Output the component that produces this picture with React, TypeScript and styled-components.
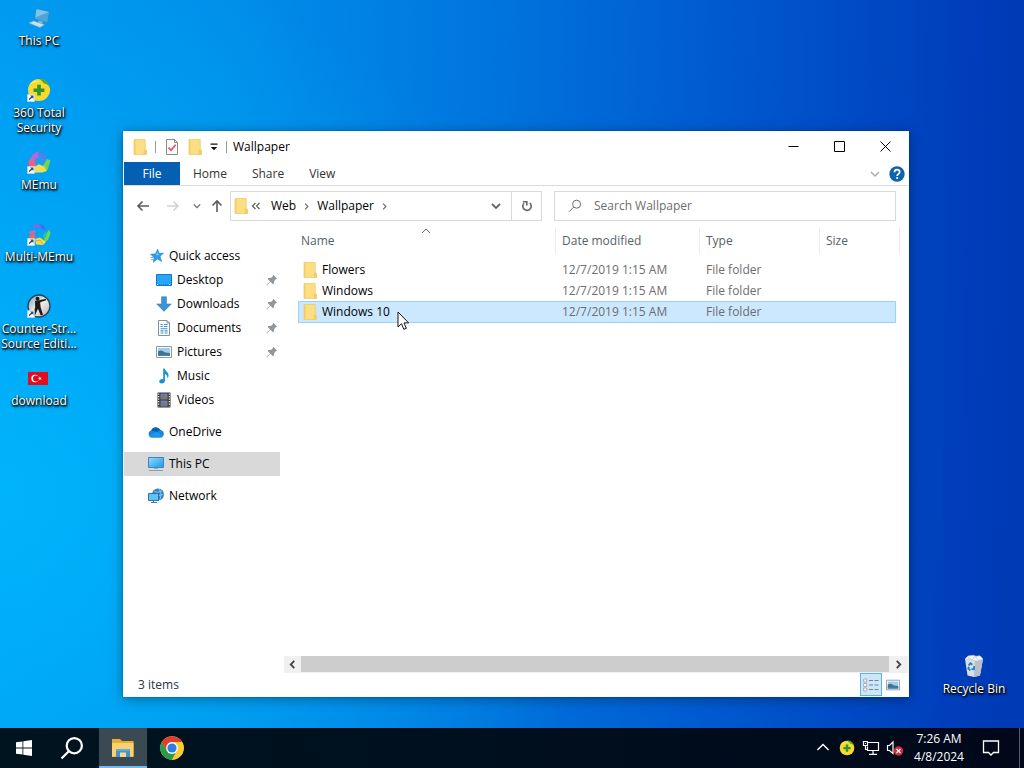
import React from "react";
import styled, { createGlobalStyle, css } from "styled-components";

const GlobalStyle = createGlobalStyle`
  * { box-sizing: border-box; }
  html, body, #root { height: 100%; }
  body {
    margin: 0;
    overflow: hidden;
    font-family: "Open Sans", "Noto Sans", sans-serif;
    font-size: 12px;
    line-height: 16px;
    color: #000;
  }
  button, input {
    margin: 0;
    padding: 0;
    border: 0;
    background: none;
    font: inherit;
    color: inherit;
  }
  svg { display: block; flex: none; }
`;

/* ---------- shell ---------- */

const Screen = styled.div`
  display: flex;
  flex-direction: column;
  height: 100%;
`;

const Desktop = styled.main`
  position: relative;
  flex: 1;
  min-height: 0;
  background:
    radial-gradient(ellipse 60% 75% at 0% 68%, rgba(0, 190, 255, 0.75), rgba(0, 180, 255, 0) 100%),
    linear-gradient(91deg, #0098f0 0%, #008fea 22%, #0074dd 48%, #0052cb 76%, #003dba 94%, #003ab4 100%);
`;

const ShortcutColumn = styled.div`
  display: flex;
  flex-direction: column;
  align-items: flex-end;
  width: 77px;
  padding-top: 6px;
`;

const Shortcut = styled.button<{ $corner?: boolean }>`
  display: flex;
  flex-direction: column;
  align-items: center;
  gap: 3px;
  width: 76px;
  height: 72px;
  color: #fff;
  line-height: 15px;
  text-align: center;
  text-shadow: 1px 1px 2px #000, 0 1px 2px #000, 1px 2px 3px rgba(0, 0, 0, 0.6);
  white-space: pre-line;
  ${(p) =>
    p.$corner &&
    css`
      position: absolute;
      right: 12px;
      bottom: 2px;
    `}
`;

const Pointer = styled.svg`
  position: absolute;
  left: 397px;
  top: 311px;
`;

/* ---------- explorer window ---------- */

const Window = styled.section`
  position: absolute;
  top: 131px;
  right: 115px;
  bottom: 31px;
  left: 123px;
  display: flex;
  flex-direction: column;
  border: 1px solid #f4fbff;
  background: #fff;
  box-shadow: 0 0 1px rgba(0, 40, 90, 0.7), 0 2px 12px rgba(0, 0, 0, 0.35);
`;

const TitleBar = styled.header`
  display: flex;
  align-items: center;
  height: 30px;
  padding-left: 9px;
`;

const QuickTools = styled.div`
  display: flex;
  align-items: center;
  gap: 8px;
`;

const Separator = styled.span`
  width: 1px;
  height: 12px;
  background: #999;
`;

const Title = styled.h1`
  flex: 1;
  margin: 0 0 0 6px;
  font-size: 12px;
  font-weight: 400;
`;

const IconButton = styled.button<{ $w?: number; $h?: number }>`
  display: flex;
  align-items: center;
  justify-content: center;
  width: ${(p) => (p.$w ? p.$w + "px" : "auto")};
  height: ${(p) => (p.$h ? p.$h + "px" : "auto")};
`;

const WindowButton = styled(IconButton)`
  align-self: flex-start;
  width: 46px;
  height: 28px;
`;

const Ribbon = styled.nav`
  display: flex;
  align-items: center;
  gap: 1px;
  height: 24px;
  padding-right: 3px;
  border-bottom: 1px solid #dadbdc;
`;

const Tab = styled.button<{ $file?: boolean }>`
  height: 23px;
  padding: 0 12px;
  color: #333;
  ${(p) =>
    p.$file &&
    css`
      width: 56px;
      background: #0560b3;
      color: #fff;
    `}
`;

const Spacer = styled.span`
  flex: 1;
`;

const Toolbar = styled.div`
  display: grid;
  grid-template-columns: 99px minmax(0, 324fr) minmax(0, 342fr);
  align-items: center;
  height: 40px;
  padding: 0 12px 0 7px;
`;

const History = styled.div`
  display: flex;
  align-items: center;
  gap: 2px;
`;

const AddressBar = styled.div`
  display: flex;
  align-items: center;
  height: 30px;
  margin-right: 12px;
  padding-left: 3px;
  border: 1px solid #d9d9d9;
`;

const Crumb = styled.button`
  padding: 0 7px;
`;

const Refresh = styled(IconButton)`
  width: 30px;
  height: 28px;
  border-left: 1px solid #d9d9d9;
`;

const SearchBox = styled.label`
  display: flex;
  align-items: center;
  gap: 12px;
  height: 30px;
  padding-left: 13px;
  border: 1px solid #d9d9d9;
`;

const SearchInput = styled.input`
  flex: 1;
  min-width: 0;
  outline: none;
  &::placeholder {
    color: #6d6d6d;
    opacity: 1;
  }
`;

const Body = styled.div`
  display: flex;
  flex: 1;
  min-height: 0;
`;

const NavPane = styled.nav`
  width: 156px;
  padding-top: 18px;
`;

const NavItem = styled.a<{ $child?: boolean; $selected?: boolean; $apart?: boolean }>`
  display: flex;
  align-items: center;
  gap: 5px;
  height: 24px;
  margin-top: ${(p) => (p.$apart ? "8px" : "0")};
  padding-left: ${(p) => (p.$child ? "32px" : "24px")};
  padding-right: 2px;
  background: ${(p) => (p.$selected ? "#d9d9d9" : "transparent")};
  color: #000;
  text-decoration: none;
`;

const NavLabel = styled.span`
  flex: 1;
  white-space: nowrap;
`;

const FolderPane = styled.div`
  display: flex;
  flex: 1;
  flex-direction: column;
  min-width: 0;
  margin-left: 4px;
`;

const FileArea = styled.div`
  flex: 1;
  padding: 2px 8px 0 14px;
`;

const FileTable = styled.table`
  width: 100%;
  border-collapse: separate;
  border-spacing: 0;
  table-layout: fixed;
`;

const HeadCell = styled.th<{ $w?: number }>`
  width: ${(p) => (p.$w ? p.$w + "px" : "auto")};
  padding: 0 0 5px;
  font-weight: 400;
`;

const SortButton = styled.button<{ $first?: boolean }>`
  position: relative;
  display: flex;
  align-items: center;
  width: 100%;
  height: 26px;
  padding-left: ${(p) => (p.$first ? "3px" : "6px")};
  border-right: 1px solid #ececec;
  color: #565f6b;
`;

const SortMark = styled.svg`
  position: absolute;
  top: 0;
  left: 48%;
`;

const Row = styled.tr<{ $selected?: boolean }>`
  td {
    height: 21px;
    padding: 0 0 0 6px;
    color: #6d6d6d;
    background-clip: padding-box;
  }
  td:first-child {
    color: #000;
    padding-left: 5px;
  }
  td:last-child {
    border-right: 4px solid transparent;
  }
  ${(p) =>
    p.$selected &&
    css`
      td {
        height: 22px;
        background-color: #cce8ff;
        box-shadow: inset 0 1px #99d1ff, inset 0 -1px #99d1ff;
      }
      td:first-child {
        box-shadow: inset 0 1px #99d1ff, inset 0 -1px #99d1ff, inset 1px 0 #99d1ff;
      }
      td:last-child {
        box-shadow: inset 0 1px #99d1ff, inset 0 -1px #99d1ff, inset -1px 0 #99d1ff;
      }
    `}
`;

const FileName = styled.span`
  display: flex;
  align-items: center;
  gap: 5px;
`;

const ScrollBar = styled.div`
  display: flex;
  height: 17px;
  padding-bottom: 1px;
  background: #f0f0f0;
`;

const ScrollThumb = styled.div`
  flex: 1;
  background: #cdcdcd;
`;

const StatusBar = styled.footer`
  display: flex;
  align-items: center;
  height: 23px;
  padding: 0 4px 0 14px;
  color: #26344a;
`;

const ViewButton = styled(IconButton)<{ $on?: boolean }>`
  width: 22px;
  height: 23px;
  border: 1px solid ${(p) => (p.$on ? "#5bb4e5" : "transparent")};
  background: ${(p) => (p.$on ? "#cce8f8" : "transparent")};
`;

/* ---------- taskbar ---------- */

const TaskBar = styled.footer`
  display: flex;
  height: 40px;
  background: linear-gradient(90deg, #00141f, #000f1e 50%, #00081a);
  color: #fff;
`;

const TaskButton = styled.button<{ $active?: boolean }>`
  display: flex;
  align-items: center;
  justify-content: center;
  width: 48px;
  height: 40px;
  ${(p) =>
    p.$active &&
    css`
      background: #3a4952;
      box-shadow: inset 0 -2px #76b9ed;
    `}
`;

const RunningApps = styled.div`
  display: flex;
  flex: 1;
  gap: 1px;
  margin-left: 3px;
`;

const TrayButton = styled(TaskButton)`
  width: 24px;
`;

const Clock = styled.button`
  width: 60px;
  padding-left: 4px;
  line-height: 18px;
  text-align: center;
  white-space: pre-line;
`;

const ActionCenter = styled(TaskButton)`
  width: 52px;
  padding-right: 4px;
`;

const ShowDesktop = styled.button`
  width: 5px;
  border-left: 1px solid #56606c;
`;

/* ---------- drawings ---------- */

const Chevron = ({
  dir,
  size = 8,
  color = "#666",
  width = 1.6,
}: {
  dir: "up" | "down" | "left" | "right";
  size?: number;
  color?: string;
  width?: number;
}) => {
  const d = {
    up: "M1 6.5 5 2.5 9 6.5",
    down: "M1 3 5 7 9 3",
    left: "M7 1 3 5 7 9",
    right: "M3 1 7 5 3 9",
  }[dir];
  return (
    <svg width={size} height={size} viewBox="0 0 10 10" fill="none" stroke={color} strokeWidth={width}>
      <path d={d} />
    </svg>
  );
};

const Folder = () => (
  <svg width="14" height="16" viewBox="0 0 14 16">
    <path d="M1 .5h11.2v9.8l1.3 1.2v4H1z" fill="#fbdf82" />
    <path d="M1 .5h1.5v15H1z" fill="#f3cf65" />
    <path d="M12.2 9.8l-1.6 1.9v3.8h2.9v-4z" fill="#f0cd69" />
    <path d="M1 .5h11.2v9.8l1.3 1.2v4H1z" fill="none" stroke="#eccb6b" strokeWidth=".8" />
  </svg>
);

const CheckedPage = () => (
  <svg width="14" height="16" viewBox="0 0 14 16">
    <path d="M1.5.5h8l3 3v12h-11z" fill="#fafafa" stroke="#8a8a8a" />
    <path d="M9.5.5v3h3" fill="none" stroke="#8a8a8a" />
    <path d="m3.5 8.6 2.6 2.7 4.6-5.6" fill="none" stroke="#e0525e" strokeWidth="1.7" />
  </svg>
);

const Monitor = () => (
  <svg width="16" height="16" viewBox="0 0 16 16">
    <defs>
      <linearGradient id="screen" x1="0" y1="0" x2="1" y2="1">
        <stop offset="0" stopColor="#8fdcff" />
        <stop offset="1" stopColor="#1f98e6" />
      </linearGradient>
    </defs>
    <path d="M.5 1.5h15v10H.5z" fill="url(#screen)" stroke="#3c87bd" />
    <path d="M6 12h4v1H6z" fill="#9ab" />
    <path d="M1 14.5h14" stroke="#8aa0ae" />
  </svg>
);

const Star = () => (
  <svg width="16" height="16" viewBox="0 0 16 16">
    <path d="m9.600 1 1.500 4.300 4.500-.1-3.500 3.100 1.500 5.200-4.100-2.500-4.200 3.300.7-4.900L2.500 6.300l5-.5z" fill="#2d9be6" stroke="#1480c8" strokeWidth=".5" />
    <path d="m9.300 3.500.9 2.900 2.600.2-4.600.9z" fill="#7fd0fa" />
    <path d="M2.500 9.500h3M3 11.800h2" stroke="#6bb8ea" />
  </svg>
);

const DesktopGlyph = () => (
  <svg width="16" height="16" viewBox="0 0 16 16">
    <path d="M.5 2.500h15v11H.5z" fill="#27a5f7" stroke="#0f7ac9" />
    <path d="M1 12.500h1.500M13 12.500h2" stroke="#eaf6ff" strokeDasharray="1 1" />
    <path d="M3 12.500h10" stroke="#2583c7" strokeDasharray="1 1" />
  </svg>
);

const DownArrow = () => (
  <svg width="16" height="16" viewBox="0 0 16 16">
    <path d="M5.5.7h5v7.2h4.8L8 15.4.7 7.9h4.8z" fill="#3d93d6" stroke="#2c7fc0" strokeWidth=".5" />
  </svg>
);

const DocumentGlyph = () => (
  <svg width="16" height="16" viewBox="0 0 16 16">
    <path d="M2.5.5h8.5l2.5 2.500v12.500h-11z" fill="#fff" stroke="#83919b" />
    <path d="M11 .5V3h2.5" fill="none" stroke="#83919b" />
    <path d="M4.5 4.5h2.200M8 4.500h3.500M4.500 6.500h2.200M8 6.500h3.500M4.500 8.700h7M4.500 10.900h3M8.600 10.900h3M4.500 13h3M8.600 13h3" stroke="#3892c4" strokeWidth="1.1" />
  </svg>
);

const PictureGlyph = ({ w = 16 }: { w?: number }) => (
  <svg width={w} height={w} viewBox="0 0 16 16">
    <path d="M.5 2.500h15v11H.5z" fill="#fff" stroke="#8d989f" />
    <path d="M2 4h12v8H2z" fill="#9bd0f0" />
    <path d="M2 7.500c3-2 5-.3 7 1l5 .6V12H2z" fill="#4b6f86" />
    <path d="M2 10.600h12V12H2z" fill="#3685c3" />
  </svg>
);

const Note = () => (
  <svg width="16" height="16" viewBox="0 0 16 16">
    <path d="M7.200.5h1.600c.3 3 4.400 3.800 3.700 7.700-.2 1-.7 1.800-1.200 2.300.5-2.600-.4-3.700-2.400-4.600v6.900c0 1.700-1.600 2.700-3.200 2.700-1.400 0-2.500-.8-2.500-2 0-1.500 1.900-2.700 4-2.300z" fill="#1b8fd6" />
  </svg>
);

const Film = () => (
  <svg width="16" height="16" viewBox="0 0 16 16">
    <path d="M1.500.5h13v15h-13z" fill="#37373b" />
    <path d="M4.500 1.500h7v6h-7zM4.500 8.500h7v6h-7z" fill="#6680c4" />
    <path d="M4.500 3.500l2 1 1-2 2 3 2-1v2.500h-2l-2-1-3 1zM4.500 12l3-2 1 2 3-1v1.500l-3 1-4-.5z" fill="#8a744c" />
    <path d="M2.700 1.500v13M13.300 1.500v13" stroke="#f4f4f4" strokeWidth="1.2" strokeDasharray="1.300 1.200" />
  </svg>
);

const Cloud = () => (
  <svg width="16" height="16" viewBox="0 0 16 16">
    <path d="M3.700 13.500a3.600 3.600 0 0 1-.6-7A5.200 5.200 0 0 1 12.500 6a3.800 3.800 0 0 1 .2 7.500z" fill="#1a86d9" />
    <path d="M3.100 6.500A5.200 5.200 0 0 1 12.300 6L9 8z" fill="#0b5fae" />
    <path d="M1 12c3-2 6-3.700 8-4 2 .8 4 2.400 5.400 5-.5.4-1 .5-1.700.5h-9C2.600 13.500 1.600 12.900 1 12z" fill="#1f97e4" />
  </svg>
);

const NetworkGlyph = () => (
  <svg width="16" height="16" viewBox="0 0 16 16">
    <circle cx="10" cy="6.500" r="6" fill="#2f83bb" />
    <path d="M6 3c2 2 6 1 8-.2M9 7c3 .8 5 0 6.500-1M11 1c2.500 3 2.500 7 .8 10.500" fill="none" stroke="#8fcdf0" />
    <path d="M.5 5.500h10v7H.5z" fill="#62c2f5" stroke="#2675ac" />
    <path d="M3 14.500h6M5.500 13v1.500" stroke="#46799c" />
  </svg>
);

const Pin = () => (
  <svg width="12" height="12" viewBox="0 0 12 12">
    <path d="M7.300.8 11.200 4.700l-1.200.3-2 2.200-.2 2.600-.9.4-2.400-2.400L1 11.300l-.4-.5L4.100 7.400 1.700 5l.5-.9 2.700-.2L7 2z" fill="#8f989f" />
  </svg>
);

const ShortcutArrow = () => (
  <g>
    <path d="M.5 16.500h7v7h-7z" fill="#fff" stroke="#c9d6df" strokeWidth=".6" />
    <path d="M2 22.300v-1.500l2.200-2.200-1.200-1.100h3.500V21l-1.200-1.200z" fill="#254d8e" />
  </g>
);

const PcIcon = () => (
  <svg width="24" height="24" viewBox="0 0 24 24">
    <path d="M9 2.500 22.500 5.500 20.500 17 7.500 13z" fill="#4aa6d8" stroke="#2f86b8" strokeWidth=".7" />
    <path d="M9.500 3.300 22 6.100 8.400 11.500z" fill="#7cc6ec" />
    <path d="m12 14.500 4 1.200-1 2-4-1.500z" fill="#8fb0c2" />
    <path d="M2 17 6.500 15l11 3.600-4.500 2.900z" fill="#c9dfea" stroke="#7fa8bd" strokeWidth=".5" />
  </svg>
);

const Shield360 = ({ size = 24, shortcut = false }: { size?: number; shortcut?: boolean }) => (
  <svg width={size} height={size} viewBox="0 0 24 24">
    <circle cx="12" cy="12" r="11" fill="#f6da2c" />
    <path d="M12 1c5-.8 10.500 3.500 11 9-1.500-3-3.500-4.500-6-4.500C15.500 3.400 14 2 12 1z" fill="#4da535" />
    <path d="M2 8c3-5 7-6 11-4-4-.6-8 .6-11 4z" fill="#fff28a" />
    <path d="M10.200 6.800h3.600v3.600h3.600V14h-3.600v3.600h-3.600V14H6.600v-3.600h3.600z" fill="#319331" />
    {shortcut && <ShortcutArrow />}
  </svg>
);

const MemuIcon = () => (
  <svg width="24" height="24" viewBox="0 0 24 24">
    <path d="M1.500 11 6 4.500 10.500 1l6 5.500L8 10z" fill="#b06ae0" />
    <path d="M10.500 1 18 5l2.500 5.500L12 9z" fill="#6b74ee" />
    <path d="m7 9.500 8-4 4 6-2.500 6H9z" fill="#1c9cf2" />
    <path d="M1.500 11 7.500 8.500 9 17l-7 2z" fill="#ee5f86" />
    <path d="M20 9l3.500 1.500L20.500 20l-4.500.5-1-3z" fill="#71d64c" />
    <path d="m6 17.500 6-3.300 5 2.300 3 4.500-5 1.500H6z" fill="#f2dd57" />
    <ShortcutArrow />
  </svg>
);

const MultiMemuIcon = () => (
  <svg width="24" height="24" viewBox="0 0 24 24">
    <path d="m5 4 5-2.500 4 4.500-5-.5z" fill="#8b62e6" />
    <path d="m12 1 6 4 .5 4-4-3z" fill="#5b62e8" />
    <path d="m1 10 7-2 .5 2.500L3.500 12z" fill="#e8609c" />
    <path d="m2 13 6-1.500v5L3 17.500z" fill="#f2655c" />
    <path d="M22 7.500 23.500 11 21 18l-4.500 3L18 14z" fill="#6fd94f" />
    <path d="m16 13 3-4 .5 5-3 3.500z" fill="#35b9a0" />
    <path d="m8 17 5-1.500 6 4.500-3 3-7-.500z" fill="#f4dc4d" />
    <path d="m9 19 4-1 3 4.500" fill="none" stroke="#f39a3f" />
    <ShortcutArrow />
  </svg>
);

const CounterStrikeIcon = () => (
  <svg width="24" height="24" viewBox="0 0 24 24">
    <defs>
      <linearGradient id="cs" x1="0" y1="0" x2="1" y2="1">
        <stop offset="0" stopColor="#789fca" />
        <stop offset=".5" stopColor="#f3f2de" />
        <stop offset="1" stopColor="#b9a3c7" />
      </linearGradient>
    </defs>
    <circle cx="12" cy="12" r="11" fill="url(#cs)" stroke="#29435a" strokeWidth="1.400" />
    <circle cx="10.500" cy="4.700" r="2" fill="#1b1b1b" />
    <path d="m8 7 4-.8 7-1.500.2 1.500-6 2 .4 5 2.500 8h-2.500l-2.600-6.500-3 6.500H6l2.200-8z" fill="#1b1b1b" />
    <ShortcutArrow />
  </svg>
);

const FlagIcon = () => (
  <svg width="24" height="24" viewBox="0 0 24 24">
    <path d="M1 6h20v13H1z" fill="#e00d1f" />
    <circle cx="8" cy="12.500" r="3.700" fill="#fff" />
    <circle cx="9" cy="12.500" r="3" fill="#e00d1f" />
    <path d="m11 12.500 1.400-.5v-1.400l.9 1.200 1.400-.4-.9 1.100.9 1.200-1.400-.4-.9 1.100v-1.400z" fill="#fff" />
  </svg>
);

const BinIcon = () => (
  <svg width="24" height="24" viewBox="0 0 24 24">
    <path d="M3 5 21 5l-3 16.500-6 1.500-6.500-1.500z" fill="#d9dfe4" />
    <path d="m13 5 8 0-3 16.500-6 1.500z" fill="#b8c1c9" />
    <path d="m3 5 3-3 5-.8 3 1 4-.4 3 3.200-6 2z" fill="#f5f7f8" stroke="#b8c2c9" strokeWidth=".6" />
    <path d="m6 3.500 4 2 3-3 3 3" fill="none" stroke="#c2cacf" />
    <path d="m6.600 11.500 1.800-2.300 2 1.500M12.200 12l-.3 3.400-2.400-.2M8.300 16.300l-2-1.800.6-1.800" fill="none" stroke="#1280cf" strokeWidth="1.700" />
  </svg>
);

const Help = () => (
  <svg width="16" height="16" viewBox="0 0 16 16">
    <circle cx="8" cy="8" r="7.700" fill="#0e64ab" />
    <path d="M5.500 6.200c0-3.400 5.200-3.200 5.200-.3 0 2-2.500 1.900-2.500 4" fill="none" stroke="#fff" strokeWidth="1.700" />
    <circle cx="8.200" cy="12" r="1.100" fill="#fff" />
  </svg>
);

const Arrow = ({ dir, color }: { dir: "left" | "right" | "up"; color: string }) => {
  const d = {
    left: "M13 7H2M6.500 2.500 2 7l4.500 4.500",
    right: "M1 7h11M7.500 2.500 12 7l-4.500 4.500",
    up: "M7 13V2M2.500 6.500 7 2l4.500 4.500",
  }[dir];
  return (
    <svg width="14" height="14" viewBox="0 0 14 14" fill="none" stroke={color} strokeWidth="1.600">
      <path d={d} />
    </svg>
  );
};

const MoreArrow = () => (
  <svg width="8" height="8" viewBox="0 0 8 8">
    <path d="M.5.500h7v1.200h-7zM.8 4h6.400L4 7.300z" fill="#111" />
  </svg>
);

const DoubleChevron = () => (
  <svg width="10" height="8" viewBox="0 0 10 8" fill="none" stroke="#555" strokeWidth="1.100">
    <path d="M4.500 1 1.500 4l3 3M8.500 1l-3 3 3 3" />
  </svg>
);

const RefreshGlyph = () => (
  <svg width="12" height="12" viewBox="0 0 12 12" fill="none" stroke="#666" strokeWidth="1.600">
    <path d="M8.800 3A4.200 4.200 0 1 1 3 3.200M2 1.800h3.800v3.700" />
  </svg>
);

const Magnifier = () => (
  <svg width="14" height="14" viewBox="0 0 14 14" fill="none" stroke="#6c6c6c">
    <circle cx="8.600" cy="5.200" r="4" />
    <path d="M5.700 8.100 1 12.800" />
  </svg>
);

const DetailsGlyph = () => (
  <svg width="16" height="14" viewBox="0 0 16 14" fill="none">
    <path d="M.7 1h3v3h-3zM.7 5.500h3v3h-3zM.7 10h3v3h-3z" fill="#fff" stroke="#a295a9" strokeWidth=".8" />
    <path d="M6 2.500h4M11.500 2.500h4M6 7h4M11.500 7h4M6 11.500h4M11.500 11.500h4" stroke="#6f8492" />
  </svg>
);

const WindowsLogo = () => (
  <svg width="16" height="16" viewBox="0 0 16 16" fill="#fff">
    <path d="M0 2.300 6.500 1.400v6.200H0zM7.300 1.300 16 0v7.600H7.300zM0 8.400h6.500v6.200L0 13.700zM7.300 8.400H16V16l-8.700-1.300z" />
  </svg>
);

const TaskSearch = () => (
  <svg width="24" height="24" viewBox="0 0 24 24" fill="none" stroke="#fff" strokeWidth="2.200">
    <circle cx="14.300" cy="9.700" r="7.600" />
    <path d="M8.800 15.200 1.500 22.500" />
  </svg>
);

const ExplorerLogo = () => (
  <svg width="24" height="20" viewBox="0 0 24 20">
    <path d="M1 1h8l2 2h11.500v16H1z" fill="#e5ad36" />
    <path d="M1 5h21.500v13.500H1z" fill="#fbd269" />
    <path d="M5 11h14v8H5z" fill="#4291d1" />
    <path d="M9 14.500h6V19H9z" fill="#fbd98a" />
    <path d="M5 11h14v2H5z" fill="#5dabe0" />
  </svg>
);

const ChromeLogo = () => (
  <svg width="24" height="24" viewBox="0 0 24 24">
    <circle cx="12" cy="12" r="11.800" fill="#f9cd2f" />
    <path d="M1.800 6A11.800 11.800 0 0 1 22.200 6L12 6.200 7 15z" fill="#e03d32" />
    <path d="M1.800 6A11.800 11.800 0 0 0 12 23.800l5-9H7z" fill="#2b9b4a" />
    <path d="M12 6.200h10.300A11.800 11.800 0 0 1 12 23.800l5.200-9z" fill="#f9cd2f" />
    <circle cx="12" cy="12" r="5.900" fill="#fff" />
    <circle cx="12" cy="12" r="4.600" fill="#2f7de0" />
  </svg>
);

const LanGlyph = () => (
  <svg width="18" height="16" viewBox="0 0 18 16" fill="none" stroke="#fff" strokeWidth="1.200">
    <path d="M5.500 2.500h11v8h-11v-4M11 10.500v3.500M7 14.300h8M1.500 1.500h4v4h-4zM3.500 5.500v4h2M3 3.500h1" />
  </svg>
);

const VolumeGlyph = () => (
  <svg width="18" height="16" viewBox="0 0 18 16" fill="none">
    <path d="M1.500 5.500h2l3.500-3.500v11.500L3.500 10.500h-2z" stroke="#fff" strokeWidth="1.200" />
    <circle cx="12.500" cy="11" r="4.700" fill="#d22b35" />
    <path d="m10.500 9 4 4m0-4-4 4" stroke="#fff" strokeWidth="1.200" />
  </svg>
);

const Bubble = () => (
  <svg width="18" height="18" viewBox="0 0 18 18" fill="none" stroke="#fff" strokeWidth="1.300">
    <path d="M1.500 2h15v11.500h-5L9 16l-2.500-2.500h-5z" />
  </svg>
);

const MinimizeGlyph = () => (
  <svg width="11" height="11" viewBox="0 0 11 11" stroke="#000" fill="none">
    <path d="M.5 5.500h10" />
  </svg>
);
const MaximizeGlyph = () => (
  <svg width="11" height="11" viewBox="0 0 11 11" stroke="#000" fill="none">
    <path d="M.5.500h10v10H.5z" />
  </svg>
);
const CloseGlyph = () => (
  <svg width="11" height="11" viewBox="0 0 11 11" stroke="#000" fill="none">
    <path d="m.5.500 10 10m0-10-10 10" />
  </svg>
);

/* ---------- data ---------- */

const shortcuts = [
  { label: "This PC", icon: <PcIcon /> },
  { label: "360 Total\nSecurity", icon: <Shield360 shortcut /> },
  { label: "MEmu", icon: <MemuIcon /> },
  { label: "Multi-MEmu", icon: <MultiMemuIcon /> },
  { label: "Counter-Str...\nSource Editi...", icon: <CounterStrikeIcon /> },
  { label: "download", icon: <FlagIcon /> },
];

const places = [
  { label: "Quick access", icon: <Star /> },
  { label: "Desktop", icon: <DesktopGlyph />, child: true, pinned: true },
  { label: "Downloads", icon: <DownArrow />, child: true, pinned: true },
  { label: "Documents", icon: <DocumentGlyph />, child: true, pinned: true },
  { label: "Pictures", icon: <PictureGlyph />, child: true, pinned: true },
  { label: "Music", icon: <Note />, child: true },
  { label: "Videos", icon: <Film />, child: true },
  { label: "OneDrive", icon: <Cloud />, apart: true },
  { label: "This PC", icon: <Monitor />, apart: true, selected: true },
  { label: "Network", icon: <NetworkGlyph />, apart: true },
];

const files = [
  { name: "Flowers", date: "12/7/2019 1:15 AM", type: "File folder" },
  { name: "Windows", date: "12/7/2019 1:15 AM", type: "File folder" },
  { name: "Windows 10", date: "12/7/2019 1:15 AM", type: "File folder", selected: true },
];

export default function App() {
  return (
    <Screen>
      <GlobalStyle />
      <Desktop>
        <ShortcutColumn>
          {shortcuts.map((s) => (
            <Shortcut key={s.label}>
              {s.icon}
              {s.label}
            </Shortcut>
          ))}
        </ShortcutColumn>
        <Shortcut $corner>
          <BinIcon />
          Recycle Bin
        </Shortcut>

        <Window aria-label="Wallpaper">
          <TitleBar>
            <QuickTools>
              <Folder />
              <Separator />
              <IconButton $w={16} aria-label="Properties">
                <CheckedPage />
              </IconButton>
              <IconButton aria-label="New folder">
                <Folder />
              </IconButton>
              <IconButton aria-label="Customize toolbar">
                <MoreArrow />
              </IconButton>
              <Separator />
            </QuickTools>
            <Title>Wallpaper</Title>
            <WindowButton aria-label="Minimize">
              <MinimizeGlyph />
            </WindowButton>
            <WindowButton aria-label="Maximize">
              <MaximizeGlyph />
            </WindowButton>
            <WindowButton aria-label="Close">
              <CloseGlyph />
            </WindowButton>
          </TitleBar>

          <Ribbon aria-label="Ribbon">
            <Tab $file>File</Tab>
            <Tab>Home</Tab>
            <Tab>Share</Tab>
            <Tab>View</Tab>
            <Spacer />
            <IconButton $w={26} aria-label="Expand ribbon">
              <Chevron dir="down" size={10} color="#a9a9a9" width={1.4} />
            </IconButton>
            <IconButton aria-label="Help">
              <Help />
            </IconButton>
          </Ribbon>

          <Toolbar>
            <History>
              <IconButton $w={24} $h={24} aria-label="Back">
                <Arrow dir="left" color="#5c5c5c" />
              </IconButton>
              <IconButton $w={32} $h={24} aria-label="Forward">
                <Arrow dir="right" color="#d2d2d2" />
              </IconButton>
              <IconButton $w={12} $h={24} aria-label="Recent locations">
                <Chevron dir="down" size={8} />
              </IconButton>
              <IconButton $w={24} $h={24} aria-label="Up">
                <Arrow dir="up" color="#5c5c5c" />
              </IconButton>
            </History>
            <AddressBar>
              <Folder />
              <IconButton $w={16} aria-label="Parent folders">
                <DoubleChevron />
              </IconButton>
              <Crumb>Web</Crumb>
              <Chevron dir="right" size={7} />
              <Crumb>Wallpaper</Crumb>
              <Chevron dir="right" size={7} />
              <Spacer />
              <IconButton $w={30} $h={28} aria-label="Previous locations">
                <Chevron dir="down" size={10} width={1.8} />
              </IconButton>
              <Refresh aria-label="Refresh">
                <RefreshGlyph />
              </Refresh>
            </AddressBar>
            <SearchBox>
              <Magnifier />
              <SearchInput type="text" placeholder="Search Wallpaper" aria-label="Search Wallpaper" />
            </SearchBox>
          </Toolbar>

          <Body>
            <NavPane aria-label="Places">
              {places.map((p) => (
                <NavItem key={p.label} href="#" $child={p.child} $selected={p.selected} $apart={p.apart}>
                  {p.icon}
                  <NavLabel>{p.label}</NavLabel>
                  {p.pinned && <Pin />}
                </NavItem>
              ))}
            </NavPane>
            <FolderPane>
              <FileArea>
                <FileTable>
                  <thead>
                    <tr>
                      <HeadCell>
                        <SortButton $first>
                          Name
                          <SortMark width="10" height="6" viewBox="0 0 10 6" fill="none" stroke="#666">
                            <path d="m1 5 4-4 4 4" />
                          </SortMark>
                        </SortButton>
                      </HeadCell>
                      <HeadCell $w={144}>
                        <SortButton>Date modified</SortButton>
                      </HeadCell>
                      <HeadCell $w={120}>
                        <SortButton>Type</SortButton>
                      </HeadCell>
                      <HeadCell $w={80}>
                        <SortButton>Size</SortButton>
                      </HeadCell>
                    </tr>
                  </thead>
                  <tbody>
                    {files.map((f) => (
                      <Row key={f.name} $selected={f.selected}>
                        <td>
                          <FileName>
                            <Folder />
                            {f.name}
                          </FileName>
                        </td>
                        <td>{f.date}</td>
                        <td>{f.type}</td>
                        <td />
                      </Row>
                    ))}
                  </tbody>
                </FileTable>
              </FileArea>
              <ScrollBar>
                <IconButton $w={17} $h={16} aria-label="Scroll left">
                  <Chevron dir="left" size={9} color="#444" width={2} />
                </IconButton>
                <ScrollThumb />
                <IconButton $w={19} $h={16} aria-label="Scroll right">
                  <Chevron dir="right" size={9} color="#444" width={2} />
                </IconButton>
              </ScrollBar>
            </FolderPane>
          </Body>

          <StatusBar>
            <span>3 items</span>
            <Spacer />
            <ViewButton $on aria-label="Details view">
              <DetailsGlyph />
            </ViewButton>
            <ViewButton aria-label="Large icons view">
              <PictureGlyph w={14} />
            </ViewButton>
          </StatusBar>
        </Window>

        <Pointer width="13" height="20" viewBox="0 0 13 20">
          <path d="M1 1v15l3.500-3.300 2.300 5.600 2.500-1-2.300-5.400h4.600z" fill="#fff" stroke="#111" />
        </Pointer>
      </Desktop>

      <TaskBar>
        <TaskButton aria-label="Start">
          <WindowsLogo />
        </TaskButton>
        <TaskButton aria-label="Search">
          <TaskSearch />
        </TaskButton>
        <RunningApps>
          <TaskButton $active aria-label="File Explorer">
            <ExplorerLogo />
          </TaskButton>
          <TaskButton aria-label="Chrome">
            <ChromeLogo />
          </TaskButton>
        </RunningApps>
        <TrayButton aria-label="Show hidden icons">
          <Chevron dir="up" size={14} color="#fff" width={1} />
        </TrayButton>
        <TrayButton aria-label="360 Total Security">
          <Shield360 size={16} />
        </TrayButton>
        <TrayButton aria-label="Network">
          <LanGlyph />
        </TrayButton>
        <TrayButton aria-label="Volume">
          <VolumeGlyph />
        </TrayButton>
        <Clock>{"7:26 AM\n4/8/2024"}</Clock>
        <ActionCenter aria-label="Notifications">
          <Bubble />
        </ActionCenter>
        <ShowDesktop aria-label="Show desktop" />
      </TaskBar>
    </Screen>
  );
}
